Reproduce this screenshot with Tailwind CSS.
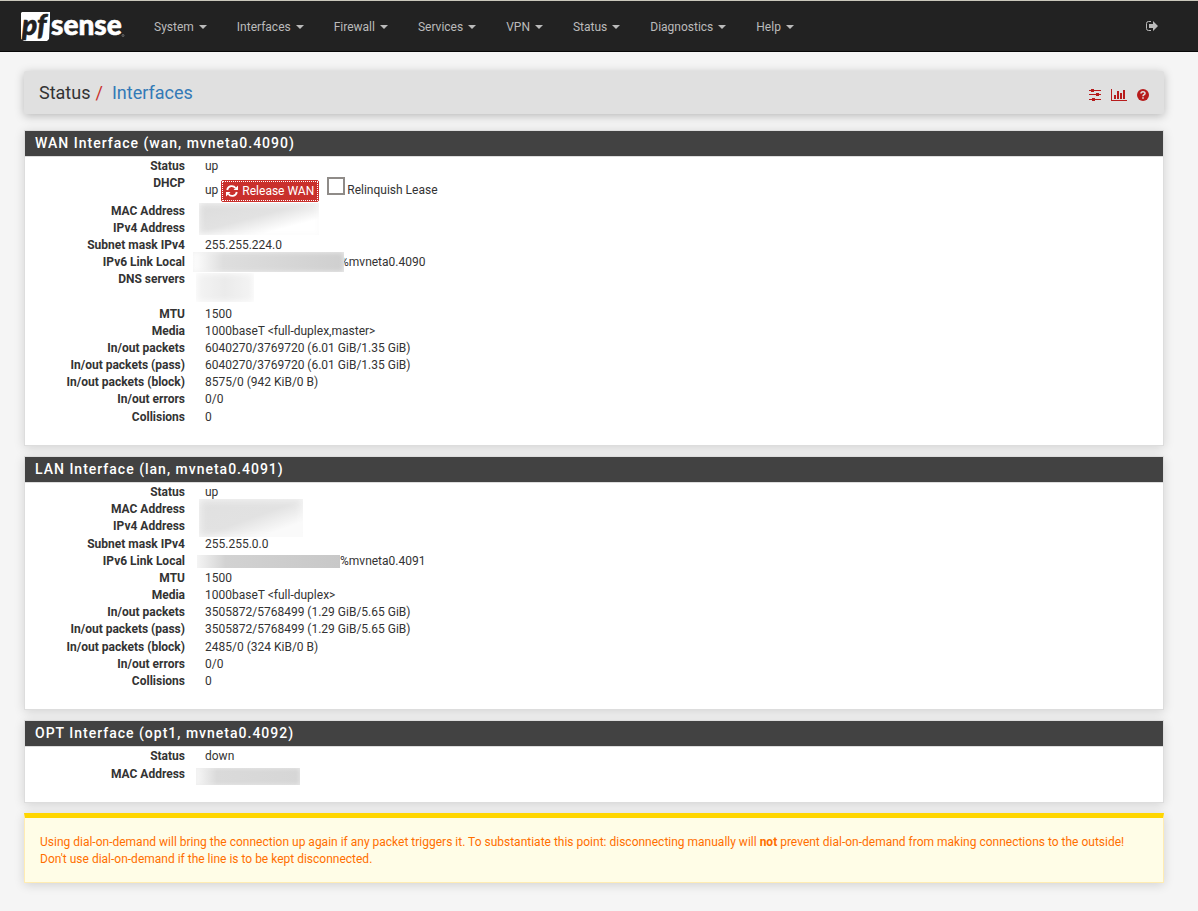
<!DOCTYPE html>
<html lang="en">
<head>
<meta charset="utf-8">
<meta name="viewport" content="width=device-width, initial-scale=1">
<title>pfSense - Status: Interfaces</title>
<script src="https://cdn.jsdelivr.net/npm/@tailwindcss/browser@4"></script>
</head>
<body class="min-h-screen bg-[#f5f5f5] font-[Roboto,sans-serif] text-xs leading-[17px] text-[#333]">

<header class="flex h-13 items-center border-t border-b border-t-[#cac8bb] border-b-[#080808] bg-[#222] pl-5 text-[#bbb]">
  <a href="#" aria-label="pfSense" class="mr-[11px] shrink-0">
    <svg class="block" width="108" height="45" viewBox="0 -7 108 45">
      <path d="M2 1H30V9L29 28L27 30H4L1 28V2Z" fill="#fff"/>
      <text x="2" y="24" font-family="Lato, sans-serif" font-weight="900" font-style="italic" font-size="28" fill="#222" stroke="#222" stroke-width="0.600">pf</text>
      <text x="31" y="24" font-family="Lato, sans-serif" font-weight="900" font-size="28" fill="#fff" stroke="#fff" stroke-width="0.600">sense</text>
      <circle cx="103" cy="24.500" r="1" fill="none" stroke="#888" stroke-width="0.700"/>
    </svg>
  </a>
  <nav class="flex flex-1 items-center pt-[2px]">
    <button type="button" class="flex items-center gap-[5px] px-[15px]">System<svg width="8" height="4" viewBox="0 0 8 4"><path d="M0 0h8L4 4z" fill="currentColor"/></svg></button>
    <button type="button" class="flex items-center gap-[5px] px-[15px]">Interfaces<svg width="8" height="4" viewBox="0 0 8 4"><path d="M0 0h8L4 4z" fill="currentColor"/></svg></button>
    <button type="button" class="flex items-center gap-[5px] px-[15px]">Firewall<svg width="8" height="4" viewBox="0 0 8 4"><path d="M0 0h8L4 4z" fill="currentColor"/></svg></button>
    <button type="button" class="flex items-center gap-[5px] px-[15px]">Services<svg width="8" height="4" viewBox="0 0 8 4"><path d="M0 0h8L4 4z" fill="currentColor"/></svg></button>
    <button type="button" class="flex items-center gap-[5px] px-[15px]">VPN<svg width="8" height="4" viewBox="0 0 8 4"><path d="M0 0h8L4 4z" fill="currentColor"/></svg></button>
    <button type="button" class="flex items-center gap-[5px] px-[15px]">Status<svg width="8" height="4" viewBox="0 0 8 4"><path d="M0 0h8L4 4z" fill="currentColor"/></svg></button>
    <button type="button" class="flex items-center gap-[5px] px-[15px]">Diagnostics<svg width="8" height="4" viewBox="0 0 8 4"><path d="M0 0h8L4 4z" fill="currentColor"/></svg></button>
    <button type="button" class="flex items-center gap-[5px] px-[15px]">Help<svg width="8" height="4" viewBox="0 0 8 4"><path d="M0 0h8L4 4z" fill="currentColor"/></svg></button>
  </nav>
  <a href="#" aria-label="Log out" class="mr-10">
    <svg width="12" height="10" viewBox="0 0 12 10"><path d="M5 .5H2.500Q.5 .5 .5 2.500V7.500Q.5 9.500 2.500 9.500H5" fill="none" stroke="currentColor"/><path d="M3 3H7V0L12 5L7 10V7H3Z" fill="currentColor"/></svg>
  </a>
</header>

<main class="flex flex-col gap-[10px] pt-[19px] pr-[34px] pl-6">
  <div class="mb-[6px] flex h-[43px] items-center justify-between rounded-xs bg-[#e0e0e0] px-[15px] shadow-[0_2px_10px_rgba(0,0,0,0.25)]">
    <h1 class="flex text-lg">Status<span class="px-[5px] text-[#c9302c]">/</span><a href="#" class="ml-1 text-[#337ab7]">Interfaces</a></h1>
    <div class="flex items-center gap-[10px] pt-1 text-[#b71c1c]">
      <a href="#" aria-label="Settings"><svg width="12" height="12" viewBox="0 0 12 12" fill="currentColor"><path d="M0 1h12v1H0zM0 5h12v1H0zM0 10h12v1H0zM2 0h3v3H2zM7 4h3v3H7zM3 9h3v3H3z"/></svg></a>
      <a href="#" aria-label="Monitoring"><svg width="16" height="12" viewBox="0 0 16 12" fill="currentColor"><path d="M0 0h1v11h15v1H0zM3 6h2v4H3zM6 2h2v8H6zM9 4h2v6H9zM12 1h2v9h-2z"/></svg></a>
      <a href="#" aria-label="Help for this page"><svg width="12" height="12" viewBox="0 0 12 12"><circle cx="6" cy="6" r="6" fill="currentColor"/><path d="M4 4.500C4 2.300 8 2.200 8 4.400C8 5.700 6 5.600 6 7.200" fill="none" stroke="#e0e0e0" stroke-width="1.600"/><path d="M5.200 8.200h1.600v1.600H5.200z" fill="#e0e0e0"/></svg></a>
    </div>
  </div>

  <section class="border border-[#ddd] bg-white pb-[19px] shadow-[0_2px_10px_rgba(0,0,0,0.14)]">
    <h2 class="border-b border-[#ddd] bg-[#424242] px-[10px] py-1 text-sm leading-[17px] font-medium tracking-[1px] text-white">WAN Interface (wan, mvneta0.4090)</h2>
    <dl class="grid grid-cols-[160px_1fr] gap-x-5 pt-px [&>dt]:text-right [&>dt]:font-bold">
      <dt>Status</dt><dd>up</dd>
      <dt>DHCP</dt>
      <dd class="flex h-7 items-end">
        <span class="mb-1">up</span>
        <button type="button" class="mb-px ml-[3px] flex h-[22px] items-center gap-1 rounded-xs border border-[#c9302c] bg-[#c9302c] px-1 text-white outline-1 -outline-offset-2 outline-dotted outline-white"><svg width="12" height="12" viewBox="0 0 12 12"><path d="M1.200 5C2 .4 7.500 0 9.500 3M10.800 7C10 11.600 4.500 12 2.500 9" fill="none" stroke="currentColor" stroke-width="1.800"/><path d="M12 .5V5H7.500zM0 11.500V7H4.500z" fill="currentColor"/></svg>Release WAN</button>
        <input id="relinquish" type="checkbox" class="mb-2 ml-2 size-[18px] appearance-none border-2 border-[#8f8b88] bg-white checked:bg-[#337ab7]">
        <label for="relinquish" class="mb-1 ml-[2px]">Relinquish Lease</label>
      </dd>
      <dt>MAC Address</dt>
      <dd class="relative"><span role="img" aria-label="Hidden addresses" class="absolute top-0 -left-[6px] h-8 w-[120px] bg-linear-to-br from-[#dcdcdc] via-[#e2e2e2] via-45% to-white to-75% shadow-[inset_0_0_7px_#fafafa]"></span></dd>
      <dt>IPv4 Address</dt><dd></dd>
      <dt>Subnet mask IPv4</dt><dd>255.255.224.0</dd>
      <dt>IPv6 Link Local</dt>
      <dd class="relative pl-[135px]">%mvneta0.4090<span role="img" aria-label="Hidden address" class="absolute -top-[2px] -left-3 h-5 w-[151px] bg-linear-to-r from-white via-[#dedede] via-20% to-[#cfcfcf] shadow-[inset_0_0_5px_#f0f0f0]"></span></dd>
      <dt class="h-[35px]">DNS servers</dt>
      <dd class="relative"><span role="img" aria-label="Hidden servers" class="absolute top-[2px] -left-[9px] h-[29px] w-[58px] bg-linear-to-r from-[#f4f4f4] via-[#ebebeb] to-[#f4f4f4] shadow-[inset_0_0_7px_#fff]"></span></dd>
      <dt>MTU</dt><dd>1500</dd>
      <dt>Media</dt><dd>1000baseT &lt;full-duplex,master&gt;</dd>
      <dt>In/out packets</dt><dd>6040270/3769720 (6.01 GiB/1.35 GiB)</dd>
      <dt>In/out packets (pass)</dt><dd>6040270/3769720 (6.01 GiB/1.35 GiB)</dd>
      <dt>In/out packets (block)</dt><dd>8575/0 (942 KiB/0 B)</dd>
      <dt class="h-[18px]">In/out errors</dt><dd>0/0</dd>
      <dt>Collisions</dt><dd>0</dd>
    </dl>
  </section>

  <section class="border border-[#ddd] bg-white pb-[19px] shadow-[0_2px_10px_rgba(0,0,0,0.14)]">
    <h2 class="border-b border-[#ddd] bg-[#424242] px-[10px] py-1 text-sm leading-[17px] font-medium tracking-[1px] text-white">LAN Interface (lan, mvneta0.4091)</h2>
    <dl class="grid grid-cols-[160px_1fr] gap-x-5 pt-px [&>dt]:text-right [&>dt]:font-bold">
      <dt>Status</dt><dd>up</dd>
      <dt>MAC Address</dt>
      <dd class="relative"><span role="img" aria-label="Hidden addresses" class="absolute -top-[2px] -left-[6px] h-[38px] w-[104px] bg-linear-to-br from-[#e0e0e0] via-[#e2e2e2] to-[#fafafa] to-80% shadow-[inset_0_0_8px_#fafafa]"></span></dd>
      <dt class="h-[18px]">IPv4 Address</dt><dd></dd>
      <dt>Subnet mask IPv4</dt><dd>255.255.0.0</dd>
      <dt>IPv6 Link Local</dt>
      <dd class="relative pl-[135px]"><span role="img" aria-label="Hidden address" class="absolute top-[2px] -left-2 h-[13px] w-[143px] bg-linear-to-r from-[#f4f4f4] via-[#d2d2d2] via-20% to-[#c8c8c8]"></span>%mvneta0.4091</dd>
      <dt>MTU</dt><dd>1500</dd>
      <dt>Media</dt><dd>1000baseT &lt;full-duplex&gt;</dd>
      <dt>In/out packets</dt><dd>3505872/5768499 (1.29 GiB/5.65 GiB)</dd>
      <dt class="h-[18px]">In/out packets (pass)</dt><dd>3505872/5768499 (1.29 GiB/5.65 GiB)</dd>
      <dt>In/out packets (block)</dt><dd>2485/0 (324 KiB/0 B)</dd>
      <dt>In/out errors</dt><dd>0/0</dd>
      <dt>Collisions</dt><dd>0</dd>
    </dl>
  </section>

  <section class="border border-[#ddd] bg-white pb-[19px] shadow-[0_2px_10px_rgba(0,0,0,0.14)]">
    <h2 class="border-b border-[#ddd] bg-[#424242] px-[10px] py-1 text-sm leading-[17px] font-medium tracking-[1px] text-white">OPT Interface (opt1, mvneta0.4092)</h2>
    <dl class="grid grid-cols-[160px_1fr] gap-x-5 pt-px [&>dt]:text-right [&>dt]:font-bold">
      <dt class="h-[18px]">Status</dt><dd>down</dd>
      <dt>MAC Address</dt>
      <dd class="relative"><span role="img" aria-label="Hidden address" class="absolute top-[2px] -left-[9px] h-[17px] w-[104px] bg-linear-to-r from-[#f8f8f8] via-[#dadada] via-20% to-[#d6d6d6] shadow-[inset_0_0_4px_#ececec]"></span></dd>
    </dl>
  </section>

  <p class="border border-t-5 border-[#ffecb3] border-t-[#ffd600] bg-[#fffde7] px-[15px] pt-4 pb-[14px] text-[#ff6f00] shadow-[0_2px_10px_rgba(0,0,0,0.14)]">Using dial-on-demand will bring the connection up again if any packet triggers it. To substantiate this point: disconnecting manually will <strong>not</strong> prevent dial-on-demand from making connections to the outside!<br>Don't use dial-on-demand if the line is to be kept disconnected.</p>
</main>
</body>
</html>
